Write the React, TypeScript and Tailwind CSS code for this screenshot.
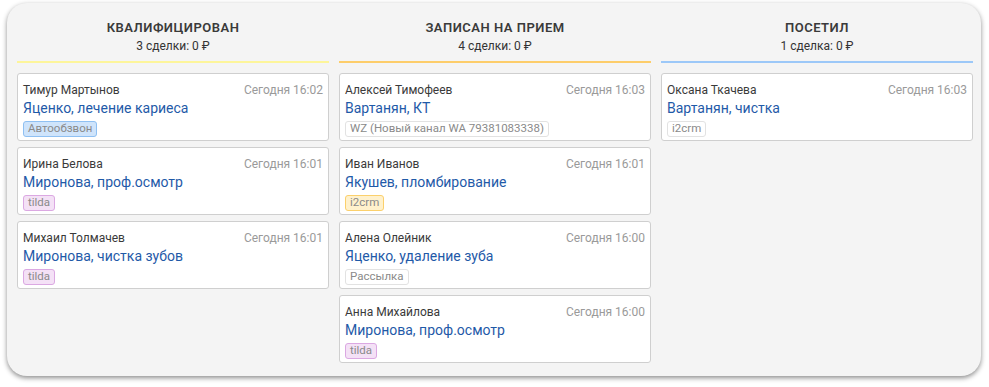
type Tag = { label: string; tone: "blue" | "purple" | "yellow" | "gray" };

type Deal = {
  name: string;
  time: string;
  title: string;
  tag: Tag;
};

type Column = {
  title: string;
  summary: string;
  line: string;
  deals: Deal[];
};

const columns: Column[] = [
  {
    title: "Квалифицирован",
    summary: "3 сделки: 0 ₽",
    line: "bg-[#fdf59a]",
    deals: [
      { name: "Тимур Мартынов", time: "Сегодня 16:02", title: "Яценко, лечение кариеса", tag: { label: "Автообзвон", tone: "blue" } },
      { name: "Ирина Белова", time: "Сегодня 16:01", title: "Миронова, проф.осмотр", tag: { label: "tilda", tone: "purple" } },
      { name: "Михаил Толмачев", time: "Сегодня 16:01", title: "Миронова, чистка зубов", tag: { label: "tilda", tone: "purple" } },
    ],
  },
  {
    title: "Записан на прием",
    summary: "4 сделки: 0 ₽",
    line: "bg-[#fdcd6a]",
    deals: [
      { name: "Алексей Тимофеев", time: "Сегодня 16:03", title: "Вартанян, КТ", tag: { label: "WZ (Новый канал WA 79381083338)", tone: "gray" } },
      { name: "Иван Иванов", time: "Сегодня 16:01", title: "Якушев, пломбирование", tag: { label: "i2crm", tone: "yellow" } },
      { name: "Алена Олейник", time: "Сегодня 16:00", title: "Яценко, удаление зуба", tag: { label: "Рассылка", tone: "gray" } },
      { name: "Анна Михайлова", time: "Сегодня 16:00", title: "Миронова, проф.осмотр", tag: { label: "tilda", tone: "purple" } },
    ],
  },
  {
    title: "Посетил",
    summary: "1 сделка: 0 ₽",
    line: "bg-[#9cc8f8]",
    deals: [
      { name: "Оксана Ткачева", time: "Сегодня 16:03", title: "Вартанян, чистка", tag: { label: "i2crm", tone: "gray" } },
    ],
  },
];

const tagStyles: Record<Tag["tone"], string> = {
  blue: "bg-[#cfe4fb] border-[#8fc0f2]",
  purple: "bg-[#f4e1f6] border-[#dba8e2]",
  yellow: "bg-[#fff1cc] border-[#fbd06c]",
  gray: "bg-white border-[#e2e2e2]",
};

function DealCard({ deal }: { deal: Deal }) {
  return (
    <div className="bg-white border border-[#cfcfcf] rounded-[3px] pt-[8px] pb-[3px] px-[5px]">
      <div className="flex justify-between text-[12px] leading-4">
        <span className="text-[#3a3a3a]">{deal.name}</span>
        <span className="text-[#9a9a9a]">{deal.time}</span>
      </div>
      <div className="text-[14px] leading-5 text-[#1f5aa8]">{deal.title}</div>
      <div className="mt-[3px] flex">
        <span className={`h-4 flex items-center px-[4px] border rounded-[3px] text-[11.5px] leading-none text-[#8a8a8a] ${tagStyles[deal.tag.tone]}`}>
          {deal.tag.label}
        </span>
      </div>
    </div>
  );
}

export default function App() {
  return (
    <div className="w-[989px] h-[387px] bg-white pt-[3px] pl-[7px]" style={{ fontFamily: 'Roboto, sans-serif' }}>
      <div className="w-[974px] h-[373px] bg-[#f4f4f4] rounded-[20px] shadow-[0_2px_5px_rgba(0,0,0,0.45)] pl-[10px] pr-[8px] pt-[16px] flex gap-[10px]">
        {columns.map(col => (
          <div key={col.title} className="w-[312px] flex flex-col">
            <h3 className="text-center text-[13px] leading-[18px] font-semibold uppercase tracking-[0.5px] text-[#3a3a3a]">{col.title}</h3>
            <p className="text-center text-[12px] leading-4 text-[#333] mt-[1px]">{col.summary}</p>
            <div className={`h-[2px] mt-[7px] ${col.line}`} />
            <div className="mt-[10px] flex flex-col gap-[6px]">
              {col.deals.map(deal => (
                <DealCard key={deal.name} deal={deal} />
              ))}
            </div>
          </div>
        ))}
      </div>
    </div>
  );
}
